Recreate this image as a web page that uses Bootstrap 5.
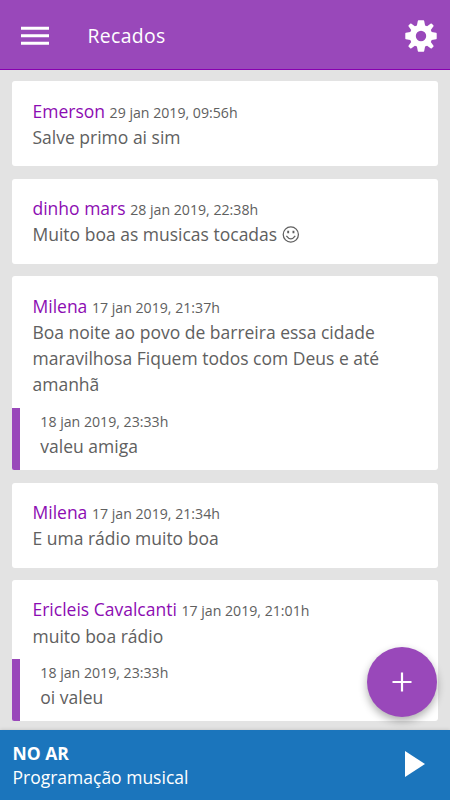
<!DOCTYPE html>
<html lang="pt-BR">
<head>
<meta charset="utf-8">
<meta name="viewport" content="width=device-width, initial-scale=1">
<title>Recados</title>
<link rel="stylesheet" href="https://cdn.jsdelivr.net/npm/bootstrap@5.3.0/dist/css/bootstrap.min.css">
<style>
:root { --brand: #9948ba; --brand-dark: #8800b0; --ink: #606060; }
body { font-family: "Open Sans", sans-serif; font-size: 17.5px; line-height: 26.25px; color: var(--ink); background: #e3e3e3; }
.topbar { height: 70px; background: var(--brand); border-bottom: 1px solid var(--brand-dark); padding: 2px 13px 0 21px; }
.topbar h1 { font-size: 19.4px; font-weight: 400; letter-spacing: .35px; margin-left: 38.5px; }
.messages { padding: 11.25px 12.5px 0 12.3px; gap: 12.5px; }
.message { border-radius: 3px; }
.message-body { padding: 16.25px 20.2px; }
.has-reply .message-body { padding-bottom: 10px; }
.author { color: #8c0cb2; }
.date { font-size: 14.15px; }
span.author, span.date { line-height: 1; }
.reply { height: 62.5px; border-left: 8px solid var(--brand); border-bottom-left-radius: 2px; padding: 1px 20px 0; line-height: 25px; }
.compose { right: 13px; bottom: 83px; width: 70px; height: 70px; background: var(--brand); box-shadow: 0 4px 8px rgba(0,0,0,.32); }
.player { height: 70px; background: #1b75bc; padding: 0 25px 2px 12.5px; line-height: 24px; box-shadow: 0 0 4px rgba(0,0,0,.16); }
.player-info { padding-top: 1px; }
</style>
<script src="https://cdn.jsdelivr.net/npm/bootstrap@5.3.0/dist/js/bootstrap.bundle.min.js" defer></script>
</head>
<body class="vh-100 overflow-hidden d-flex flex-column">
<header class="topbar d-flex align-items-center text-white flex-shrink-0">
  <button class="btn p-0 border-0 text-white d-flex" aria-label="Menu">
    <svg width="28" height="20" viewBox="0 0 28 20" fill="currentColor"><path d="M0 .8h28v3H0zM0 8.3h28v3H0zM0 15.8h28v3H0z"/></svg>
  </button>
  <h1 class="mb-0 me-auto">Recados</h1>
  <button class="btn p-0 border-0 text-white d-flex" aria-label="Configurações">
    <svg width="32" height="32" viewBox="-16 -16 32 32" fill="currentColor"><path fill-rule="evenodd" d="M-2.6-15.7H2.6Q3-15.7 3.2-15.1L4.1-10.6L6.1-9.7L9.9-12.4Q10.4-12.7 10.8-12.3L12.5-10.6Q12.8-10.2 12.5-9.7L9.8-6.1L10.7-4.1L15.1-3.2Q15.7-3 15.7-2.5V2.5Q15.7 3 15.1 3.2L10.7 4.1L9.8 6.1L12.5 9.7Q12.8 10.2 12.5 10.6L10.8 12.3Q10.4 12.7 9.9 12.4L6.1 9.7L4.1 10.6L3.2 15.1Q3 15.7 2.6 15.7H-2.6Q-3 15.7-3.2 15.1L-4.1 10.6L-6.1 9.7L-9.9 12.4Q-10.4 12.7-10.8 12.3L-12.5 10.6Q-12.8 10.2-12.5 9.7L-9.8 6.1L-10.7 4.1L-15.1 3.2Q-15.7 3-15.7 2.5V-2.5Q-15.7-3-15.1-3.2L-10.7-4.1L-9.8-6.1L-12.5-9.7Q-12.8-10.2-12.5-10.6L-10.8-12.3Q-10.4-12.7-9.9-12.4L-6.1-9.7L-4.1-10.6L-3.2-15.1Q-3-15.7-2.6-15.7ZM0-5.2A5.2 5.2 0 1 0 0 5.2A5.2 5.2 0 1 0 0-5.2Z"/></svg>
  </button>
</header>
<main class="messages d-flex flex-column flex-grow-1 overflow-hidden">
  <article class="message bg-white flex-shrink-0">
    <div class="message-body"><div><span class="author">Emerson</span> <span class="date">29 jan 2019, 09:56h</span></div><div>Salve primo ai sim</div></div>
  </article>
  <article class="message bg-white flex-shrink-0">
    <div class="message-body"><div><span class="author">dinho mars</span> <span class="date">28 jan 2019, 22:38h</span></div><div class="d-flex align-items-center">Muito boa as musicas tocadas
      <svg class="ms-1" width="19" height="19" viewBox="0 0 18 18" fill="none" stroke="currentColor"><circle cx="9.3" cy="9" r="7.2" stroke-width="1.2"/><path d="M5.1 10.3Q9.3 16 13.5 10.3" stroke-width="1.2"/><path d="M6.8 5.5v2.2M11.8 5.5v2.2" stroke-width="1.8"/></svg></div></div>
  </article>
  <article class="message has-reply bg-white flex-shrink-0">
    <div class="message-body"><div><span class="author">Milena</span> <span class="date">17 jan 2019, 21:37h</span></div><div>Boa noite ao povo de barreira essa cidade maravilhosa Fiquem todos com Deus e até amanhã</div></div>
    <div class="reply"><div class="date">18 jan 2019, 23:33h</div><div>valeu amiga</div></div>
  </article>
  <article class="message bg-white flex-shrink-0">
    <div class="message-body"><div><span class="author">Milena</span> <span class="date">17 jan 2019, 21:34h</span></div><div>E uma rádio muito boa</div></div>
  </article>
  <article class="message has-reply bg-white flex-shrink-0">
    <div class="message-body"><div><span class="author">Ericleis Cavalcanti</span> <span class="date">17 jan 2019, 21:01h</span></div><div>muito boa rádio</div></div>
    <div class="reply"><div class="date">18 jan 2019, 23:33h</div><div>oi valeu</div></div>
  </article>
</main>
<button class="compose btn border-0 p-0 rounded-circle position-fixed d-flex align-items-center justify-content-center text-white" aria-label="Novo recado">
  <svg width="20" height="20" viewBox="0 0 20 20" fill="none" stroke="currentColor" stroke-width="2.2"><path d="M10 .5v19M.5 10h19"/></svg>
</button>
<footer class="player d-flex align-items-center justify-content-between text-white flex-shrink-0">
  <div class="player-info"><div class="fw-bold">NO AR</div><div>Programação musical</div></div>
  <button class="btn p-0 border-0 text-white d-flex" aria-label="Tocar">
    <svg width="20" height="26" viewBox="0 0 20 26" fill="currentColor"><path d="M0 0L20 13L0 26z"/></svg>
  </button>
</footer>
</body>
</html>
